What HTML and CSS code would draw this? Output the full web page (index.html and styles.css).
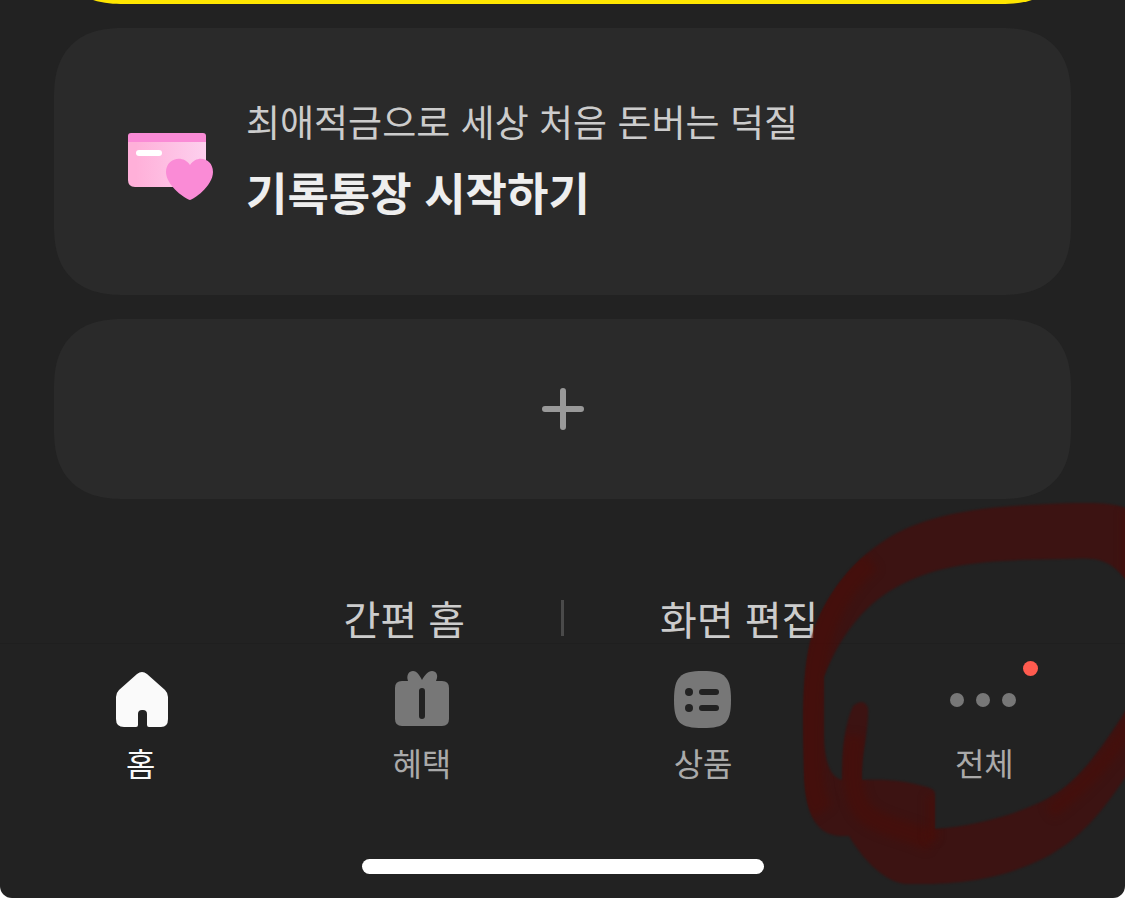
FILE: index.html
```html
<!DOCTYPE html>
<html lang="ko">
<head>
    <meta charset="UTF-8">
    <meta name="viewport" content="width=device-width, initial-scale=1.0">
    <title>홈</title>
    <link rel="stylesheet" href="styles.css">
</head>
<body>
    <div class="screen">
        <main class="cards">
            <div class="card-yellow"></div>

            <a class="card" href="#record">
                <svg class="card-icon" viewBox="0 0 86 78" aria-hidden="true">
                    <defs>
                        <linearGradient id="book" x1="0" x2="1" y1="0" y2="0">
                            <stop offset="0.1" stop-color="#ffb0d9"/>
                            <stop offset="1" stop-color="#fdd0ee"/>
                        </linearGradient>
                    </defs>
                    <path d="M0 19H78V65H7Q0 65 0 58Z" fill="url(#book)"/>
                    <path d="M0 20V14Q0 11 3 11H75Q78 11 78 14V20Z" fill="#fa8bd6"/>
                    <rect x="8" y="28" width="26" height="6" rx="3" fill="#fff"/>
                    <path d="M62 78C59 78 38 64 38 50C38 36 55 32 62 43C69 32 85 36 85 50C85 64 65 78 62 78Z" fill="#fa8bd6"/>
                </svg>
                <span class="card-text">
                    <span class="card-sub">최애적금으로 세상 처음 돈버는 덕질</span>
                    <strong class="card-title">기록통장 시작하기</strong>
                </span>
            </a>

            <button class="card-add" type="button" aria-label="추가">
                <svg width="42" height="42" viewBox="0 0 42 42" aria-hidden="true">
                    <path d="M21 3V39M3 21H39" stroke="#999" stroke-width="6" stroke-linecap="round"/>
                </svg>
            </button>
        </main>

        <div class="links">
            <a class="link-left" href="#simple">간편 홈</a>
            <span class="divider"></span>
            <a href="#edit">화면 편집</a>
        </div>

        <nav class="tabbar">
            <a class="tab active" href="#home">
                <svg class="tab-icon" viewBox="0 0 58 58" aria-hidden="true">
                    <path d="M25 3Q30 -1 35 3L53 19Q56 22 56 26V48Q56 56 49 56H37Q35 56 35 54V43Q35 39 31 39H30Q26 39 26 43V54Q26 56 24 56H12Q4 56 4 48V26Q4 22 7 19Z" fill="currentColor"/>
                </svg>
                <span>홈</span>
            </a>
            <a class="tab" href="#benefit">
                <svg class="tab-icon" viewBox="0 0 58 58" aria-hidden="true">
                    <path fill-rule="evenodd" d="M9 10H15C13 4 16 0 20 0C24 0 27 5 29 9C31 5 35 0 39 0C43 0 46 4 43 10H49Q56 10 56 17V48Q56 55 49 55H9Q2 55 2 48V17Q2 10 9 10ZM29 17Q26 17 26 20V45Q26 48 29 48Q32 48 32 45V20Q32 17 29 17Z" fill="#777"/>
                </svg>
                <span>혜택</span>
            </a>
            <a class="tab" href="#product">
                <svg class="tab-icon" viewBox="0 0 58 58" aria-hidden="true">
                    <path d="M29 0C51 0 57 6 57 29C57 52 51 57 29 57C6 57 0 52 0 29C0 6 6 0 29 0Z" fill="#777"/>
                    <g fill="#222">
                        <circle cx="15" cy="21" r="4"/>
                        <circle cx="15" cy="37" r="4"/>
                        <rect x="25" y="18" width="20" height="6" rx="3"/>
                        <rect x="25" y="34" width="20" height="6" rx="3"/>
                    </g>
                </svg>
                <span>상품</span>
            </a>
            <a class="tab" href="#all">
                <span class="tab-more">
                    <svg width="68" height="58" viewBox="0 0 68 58" fill="#777" aria-hidden="true">
                        <circle cx="7" cy="29" r="7"/>
                        <circle cx="33" cy="29" r="7"/>
                        <circle cx="59" cy="29" r="7"/>
                    </svg>
                    <span class="badge"></span>
                </span>
                <span>전체</span>
            </a>
        </nav>
        <div class="home-indicator"></div>

        <!-- red marker circle round the last tab -->
        <svg class="marker" viewBox="790 490 335 408" aria-hidden="true">
            <defs>
                <filter id="soft" color-interpolation-filters="sRGB"><feGaussianBlur stdDeviation="1.2"/></filter>
                <filter id="softer" color-interpolation-filters="sRGB" filterUnits="userSpaceOnUse" x="780" y="480" width="400" height="430"><feGaussianBlur stdDeviation="4"/></filter>
                <clipPath id="ring">
                    <path id="stroke" clip-rule="evenodd" fill-rule="evenodd" d="M1140 514C1120 503 1105 503 1075 503C1000 505 935 510 890 537C845 564 820 605 810 642C801 680 803 730 804 775C805 805 812 836 842 836H849C862 858 885 884 908 884C970 885 1010 876 1050 855C1090 832 1112 798 1140 755V687C1105 745 1080 782 1045 800C1008 818 970 826 935 829V794Q935 789 927 787C905 781 890 779 862 780C861 755 869 730 868 708Q864 697 853 706C843 730 842 755 842 780C828 777 824 755 824 735V677C838 640 862 606 895 588C940 562 990 560 1065 559C1100 558 1112 555 1140 600Z"/>
                </clipPath>
            </defs>
            <use href="#stroke" fill="#560402" fill-opacity="0.5" filter="url(#soft)"/>
            <g clip-path="url(#ring)" fill="none" stroke="#4c0b06" stroke-opacity="0.5">
                <path d="M870 560C812 610 811 680 811 750C811 780 813 800 822 812" stroke-width="24" filter="url(#softer)"/>
                <path d="M855 735C852 760 850 800 866 814C885 829 912 830 932 842" stroke-width="20" filter="url(#softer)"/>
                <path d="M1130 510V590M1140 705C1115 755 1085 785 1050 812" stroke-width="14" filter="url(#softer)"/>
                <path d="M932 795V840" stroke-width="10" filter="url(#softer)"/>
            </g>
        </svg>
    </div>
</body>
</html>
```
FILE: styles.css
```css
* { box-sizing: border-box; }
body { margin: 0; background: #fff; font-family: "Noto Sans CJK KR", "Noto Sans", sans-serif; }
a { color: inherit; text-decoration: none; }
svg { display: block; flex: none; }

.screen { position: relative; display: flex; flex-direction: column; min-height: 100vh; overflow: hidden; background: #222; border-radius: 0 0 12px 12px; }

.cards { display: flex; flex-direction: column; gap: 24px; padding: 0 54px; }
.card-yellow { height: 180px; margin-top: -176px; border-radius: 58px; background: #ffe600; }
.card { display: flex; align-items: center; gap: 32px; padding: 66px 74px 67px; border-radius: 58px; background: #2a2a2a; }
.card-icon { width: 86px; height: 78px; }
.card-text { display: flex; flex-direction: column; gap: 10px; padding-bottom: 2px; }
.card-sub { font-size: 37px; line-height: 54px; color: #ccc; }
.card-title { font-size: 45px; line-height: 68px; font-weight: 700; color: #eee; }
.card-add { display: flex; align-items: center; justify-content: center; height: 180px; border: 0; border-radius: 58px; background: #2a2a2a; cursor: pointer; }

@supports (corner-shape: superellipse(1.3)) {
    .card-yellow, .card, .card-add { border-radius: 70px; corner-shape: superellipse(1.3); }
}

.links { display: grid; grid-template-columns: 1fr 3px 1fr; column-gap: 96px; align-items: center; margin-top: 96px; padding-bottom: 2px; font-size: 40px; line-height: 46px; color: #ccc; }
.link-left { text-align: right; }
.divider { height: 36px; background: #4a4a4a; }

.tabbar { display: grid; grid-template-columns: repeat(4, 1fr); padding-top: 27px; border-top: 1px solid #1f1f1f; }
.tab { display: flex; flex-direction: column; align-items: center; gap: 12px; font-size: 32px; line-height: 42px; color: #aaa; }
.tab.active { color: #fafafa; }
.tab-icon { width: 58px; height: 58px; }
.tab-more { position: relative; }
.badge { position: absolute; top: -10px; right: -20px; width: 15px; height: 15px; border-radius: 50%; background: #ff5b4f; }

.home-indicator { width: 402px; max-width: 60%; height: 15px; margin: auto auto 24px; border-radius: 8px; background: #fff; }

.marker { position: absolute; right: 0; bottom: 0; width: 335px; height: 408px; pointer-events: none; }
```
